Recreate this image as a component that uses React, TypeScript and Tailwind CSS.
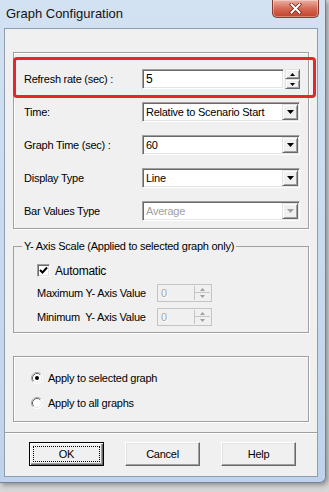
import type { ReactNode } from "react";

const sunken =
  "border border-t-[#a0a0a0] border-l-[#a0a0a0] border-r-white border-b-white shadow-[inset_1px_1px_0_#696969,inset_-1px_-1px_0_#e3e3e3]";
const raised =
  "border border-t-[#e3e3e3] border-l-[#e3e3e3] border-r-[#696969] border-b-[#696969] bg-[#f0f0f0] shadow-[inset_1px_1px_0_#ffffff,inset_-1px_-1px_0_#a0a0a0]";

function Arrow({ up = false, color = "#000", w = 7, h = 4 }: { up?: boolean; color?: string; w?: number; h?: number }) {
  const pts = up ? `0,${h} ${w},${h} ${w / 2},0` : `0,0 ${w},0 ${w / 2},${h}`;
  return (
    <svg width={w} height={h} viewBox={`0 0 ${w} ${h}`}>
      <polygon points={pts} fill={color} />
    </svg>
  );
}

function Combo({ value, disabled = false }: { value: string; disabled?: boolean }) {
  return (
    <div className={`flex h-[20px] w-[158px] bg-white p-[1px] ${sunken}`}>
      <div className={`flex flex-1 items-center pl-[2px] ${disabled ? "text-[#a0a0a0]" : ""}`}>{value}</div>
      <div className={`flex w-[16px] items-center justify-center ${raised}`}>
        <Arrow color={disabled ? "#a0a0a0" : "#000"} />
      </div>
    </div>
  );
}

function RefreshInput() {
  return (
    <div className="flex h-[20px] w-[158px] gap-[1px]">
      <div className={`flex flex-1 items-center bg-white pl-[3px] text-[12px] ${sunken}`}>5</div>
      <div className="flex w-[15px] flex-col">
        <div className={`flex h-[10px] items-center justify-center ${raised}`}>
          <Arrow up w={5} h={3} />
        </div>
        <div className={`flex h-[10px] items-center justify-center ${raised}`}>
          <Arrow w={5} h={3} />
        </div>
      </div>
    </div>
  );
}

function SpinBox() {
  return (
    <div className="flex h-[18px] w-[55px] border border-[#c4c4c4] bg-[#f0f0f0] p-[1px]">
      <div className="flex flex-1 items-center pl-[2px] text-[#a8a8a8] [text-shadow:1px_1px_0_#fff]">0</div>
      <div className="flex w-[16px] flex-col border-l border-[#c4c4c4]">
        <div className="flex h-1/2 items-center justify-center border-b border-[#c4c4c4]">
          <Arrow up w={5} h={3} color="#a0a0a0" />
        </div>
        <div className="flex h-1/2 items-center justify-center">
          <Arrow w={5} h={3} color="#a0a0a0" />
        </div>
      </div>
    </div>
  );
}

function Row({ label, children }: { label: string; children: ReactNode }) {
  return (
    <div className="flex h-[20px] items-center">
      <span className="w-[118px]">{label}</span>
      {children}
    </div>
  );
}

function Radio({ checked = false }: { checked?: boolean }) {
  return (
    <svg width="12" height="12" viewBox="0 0 12 12">
      <circle cx="6" cy="6" r="5.5" fill="#fff" />
      <path d="M2.11 9.89 A5.5 5.5 0 0 1 9.89 2.11" stroke="#a0a0a0" fill="none" />
      <path d="M2.82 9.18 A4.5 4.5 0 0 1 9.18 2.82" stroke="#696969" fill="none" />
      <path d="M9.89 2.11 A5.5 5.5 0 0 1 2.11 9.89" stroke="#ffffff" fill="none" />
      <path d="M9.18 2.82 A4.5 4.5 0 0 1 2.82 9.18" stroke="#e3e3e3" fill="none" />
      {checked && <circle cx="6" cy="6" r="2" fill="#000" />}
    </svg>
  );
}

function Button({ label, isDefault = false }: { label: string; isDefault?: boolean }) {
  if (isDefault) {
    return (
      <div className="flex h-[24px] w-[75px] border border-black bg-[#f0f0f0] p-[3px] shadow-[inset_1px_1px_0_#ffffff,inset_-1px_-1px_0_#696969,inset_-2px_-2px_0_#a0a0a0]">
        <div className="flex flex-1 items-center justify-center border border-dotted border-black">{label}</div>
      </div>
    );
  }
  return (
    <div className="flex h-[24px] w-[75px] items-center justify-center border border-t-white border-l-white border-r-[#696969] border-b-[#696969] bg-[#f0f0f0] shadow-[inset_-1px_-1px_0_#a0a0a0,inset_1px_1px_0_#e3e3e3]">
      {label}
    </div>
  );
}

export default function App() {
  return (
    <div className="relative h-[492px] w-[329px] overflow-hidden bg-[#d6d6d6] font-['Liberation_Sans',Arial,sans-serif] text-[11px] tracking-[-0.25px] text-black">
      <div className="flex h-[483px] w-[326px] flex-col rounded-br-[6px] border-r border-b border-[#71849c] bg-gradient-to-b from-[#d2e2f3] to-[#bed3ea] shadow-[2px_2px_5px_rgba(0,0,0,0.35)]">
        {/* title bar */}
        <div className="flex h-[28px] items-start justify-between">
          <span className="pl-[6px] pt-[6px] text-[13px] leading-[16px] tracking-normal text-[#141414]">Graph Configuration</span>
          <div className="mr-[6px] flex h-[18px] w-[47px] items-center justify-center rounded-b-[5px] border border-t-0 border-[#8a3a2c] bg-gradient-to-b from-[#eab1a4] via-[#d66a55] to-[#c2402b] shadow-[inset_0_0_0_1px_rgba(255,255,255,0.35)]">
            <svg width="13" height="11" viewBox="0 0 13 11">
              <path d="M2.5 1.5 L10.5 9.5 M10.5 1.5 L2.5 9.5" stroke="#6b2417" strokeWidth="3.6" strokeLinecap="square" />
              <path d="M2.5 1.5 L10.5 9.5 M10.5 1.5 L2.5 9.5" stroke="#ffffff" strokeWidth="2" strokeLinecap="square" />
            </svg>
          </div>
        </div>

        {/* client area */}
        <div className="ml-[4px] flex h-[449px] w-[314px] flex-col border border-[#8e9db0] bg-[#f0f0f0]">
          <div className="h-[404px] border-b border-[#a0a0a0] pl-[8px] pt-[23px] shadow-[0_1px_0_#ffffff]">
            {/* settings group */}
            <div className="relative flex h-[177px] w-[296px] flex-col gap-[13px] border border-[#a0a0a0] pl-[10px] pt-[16px] shadow-[1px_1px_0_#fff,inset_1px_1px_0_#fff]">
              <div className="absolute left-[-1px] top-[4px] h-[41px] w-[303px] rounded-[4px] border-[3px] border-[#e8262a]" />
              <Row label="Refresh rate (sec) :">
                <RefreshInput />
              </Row>
              <Row label="Time:">
                <Combo value="Relative to Scenario Start" />
              </Row>
              <Row label="Graph Time (sec) :">
                <Combo value="60" />
              </Row>
              <Row label="Display Type">
                <Combo value="Line" />
              </Row>
              <Row label="Bar Values Type">
                <Combo value="Average" disabled />
              </Row>
            </div>

            {/* y-axis group */}
            <fieldset className="mt-[10px] w-[296px] border border-[#a0a0a0] p-0 pb-[6px] shadow-[1px_1px_0_#fff]">
              <legend className="ml-[8px] px-[2px] leading-[14px]">Y- Axis Scale (Applied to selected graph only)</legend>
              <div className="flex flex-col pl-[23px] pt-[11px]">
                <div className="flex h-[13px] items-center gap-[5px]">
                  <div className={`flex h-[13px] w-[13px] items-center justify-center bg-white ${sunken}`}>
                    <svg width="9" height="9" viewBox="0 0 9 9">
                      <path d="M1 4 L3.5 6.5 L8 1.5" stroke="#000" strokeWidth="2" fill="none" />
                    </svg>
                  </div>
                  <span className="text-[12px]">Automatic</span>
                </div>
                <div className="mt-[7px] flex h-[18px] items-center">
                  <span className="w-[120px]">Maximum Y- Axis Value</span>
                  <SpinBox />
                </div>
                <div className="mt-[6px] flex h-[18px] items-center">
                  <span className="w-[120px]">Minimum&nbsp; Y- Axis Value</span>
                  <SpinBox />
                </div>
              </div>
            </fieldset>

            {/* apply group */}
            <div className="mt-[23px] flex h-[66px] w-[296px] flex-col gap-[9px] border border-[#a0a0a0] pl-[17px] pt-[13px] shadow-[1px_1px_0_#fff,inset_1px_1px_0_#fff]">
              <div className="flex h-[16px] items-center gap-[5px]">
                <Radio checked />
                <span>Apply to selected graph</span>
              </div>
              <div className="flex h-[16px] items-center gap-[5px]">
                <Radio />
                <span>Apply to all graphs</span>
              </div>
            </div>
          </div>

          {/* buttons */}
          <div className="flex gap-[21px] pl-[24px] pt-[9px]">
            <Button label="OK" isDefault />
            <Button label="Cancel" />
            <Button label="Help" />
          </div>
        </div>
      </div>
    </div>
  );
}
